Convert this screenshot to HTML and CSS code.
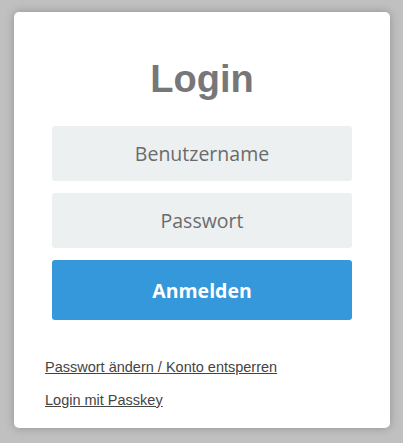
FILE: index.html
```html
<!DOCTYPE html>
<html lang="de">
<head>
<meta charset="utf-8">
<title>Login</title>
<link rel="stylesheet" href="styles.css">
</head>
<body>
<main class="page">
  <div class="card">
    <h1 class="title">Login</h1>
    <form class="form">
      <input class="field" type="text" placeholder="Benutzername">
      <input class="field" type="password" placeholder="Passwort">
      <button class="submit" type="button">Anmelden</button>
    </form>
    <div class="links">
      <a class="link" href="#">Passwort ändern / Konto entsperren</a>
      <a class="link" href="#">Login mit Passkey</a>
    </div>
  </div>
</main>
</body>
</html>
```
FILE: styles.css
```css
html, body {
  margin: 0;
  padding: 0;
  background: #c0c0c0;
  height: 100%;
}
.page {
  padding: 12px 13px 0 14px;
}
.card {
  box-sizing: border-box;
  width: 376px;
  height: 416px;
  background: #ffffff;
  border-radius: 5px;
  box-shadow: 0 0 10px rgba(0, 0, 0, 0.25);
  padding: 0 38px;
  display: flex;
  flex-direction: column;
}
.title {
  margin: 44px 0 0;
  font-family: "Liberation Sans", Arial, sans-serif;
  font-weight: bold;
  font-size: 38px;
  line-height: 46px;
  color: #777777;
  text-align: center;
}
.form {
  margin-top: 24px;
  display: flex;
  flex-direction: column;
  gap: 12px;
}
.field {
  box-sizing: border-box;
  width: 300px;
  height: 55px;
  border: none;
  border-radius: 3px;
  background: #ecf0f1;
  font-family: "Open Sans", sans-serif;
  font-size: 19.5px;
  text-align: center;
  color: #555;
  outline: none;
}
.field::placeholder {
  color: #6b6b6b;
  opacity: 1;
}
.submit {
  width: 300px;
  height: 60px;
  border: none;
  border-radius: 3px;
  background: #3498db;
  color: #ffffff;
  font-family: "Open Sans", sans-serif;
  font-weight: bold;
  font-size: 19.5px;
}
.links {
  margin: 38px -7px 0;
  display: flex;
  flex-direction: column;
  align-items: flex-start;
  gap: 14.5px;
}
.link {
  font-family: "Liberation Sans", Arial, sans-serif;
  font-size: 14.5px;
  line-height: 18px;
  color: #444444;
  text-decoration: underline;
}
```
